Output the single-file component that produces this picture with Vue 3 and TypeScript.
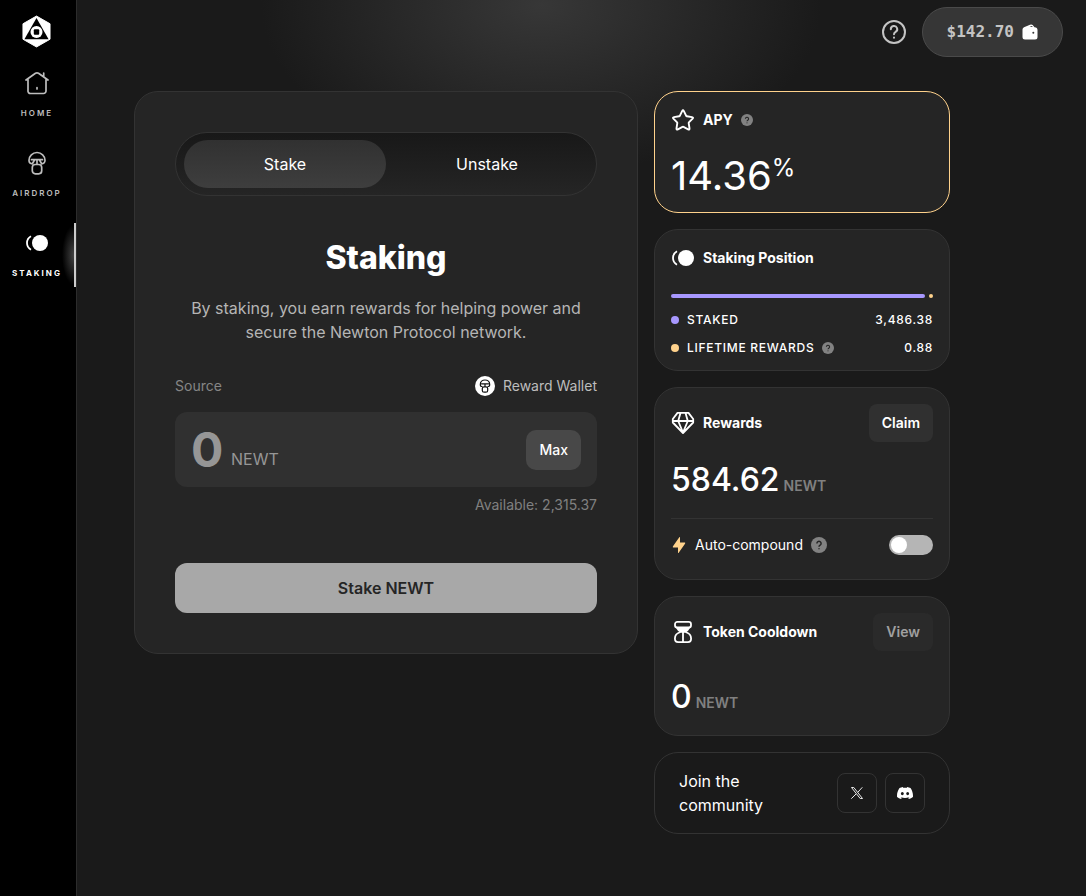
<script setup lang="ts">
import { ref } from 'vue'

type Mode = 'Stake' | 'Unstake'

const modes: Mode[] = ['Stake', 'Unstake']
const mode = ref<Mode>('Stake')
const amount = ref('')
const autoCompound = ref(false)
const available = 2315.37
const staked = 3486.38
const lifetimeRewards = 0.88

const format = (value: number): string =>
  value.toLocaleString('en-US', { minimumFractionDigits: 2, maximumFractionDigits: 2 })

const setMax = (): void => {
  amount.value = String(available)
}
</script>

<template>
  <div class="layout">
    <aside class="sidebar">
      <a class="logo" href="#" aria-label="Newton">
        <svg width="29" height="33" viewBox="0 0 30 34">
          <path d="M15 1 29 9v16l-14 8L1 25V9z" fill="#fff" stroke="#fff" stroke-linejoin="round" />
          <path d="M15 3 27.500 25H2.500z" fill="#000" />
          <circle cx="15" cy="17.500" r="6.200" fill="#fff" />
          <rect x="12.200" y="14.700" width="5.600" height="5.600" rx="1" fill="#000" />
        </svg>
      </a>
      <nav class="nav">
        <a class="nav-item" href="#">
          <svg width="24" height="24" viewBox="0 0 24 24" fill="none" stroke="currentColor" stroke-width="1.700" stroke-linecap="round" stroke-linejoin="round">
            <path d="M1 9 10.500 2.300q1.500-1 3 0L23 9M3 8.500v11A2.500 2.500 0 0 0 5.500 22.500h13a2.500 2.500 0 0 0 2.500-2.500V8.500M18.700 5.500V2M12 16.500v1.500" />
          </svg>
          <span>HOME</span>
        </a>
        <a class="nav-item" href="#">
          <svg width="24" height="24" viewBox="0 0 24 24" fill="none" stroke="currentColor" stroke-width="1.700" stroke-linecap="round" stroke-linejoin="round">
            <path d="M7.500 12.800C5 12.800 4 11 4 9.300a8 7.800 0 0 1 16 0c0 1.700-1 3.500-3.500 3.500M6.500 8.700h11M12 9v4M7.500 12.500 9.500 9M16.500 12.500l-2-3.500" />
            <rect x="7.300" y="13.500" width="9.400" height="9.300" rx="3" />
          </svg>
          <span>AIRDROP</span>
        </a>
        <a class="nav-item active" href="#" aria-current="page">
          <svg width="24" height="24" viewBox="0 0 24 24">
            <circle cx="15" cy="12" r="8" fill="currentColor" />
            <path d="M6 5.300Q2 7.500 2 12t4 6.700" fill="none" stroke="currentColor" stroke-width="1.800" />
          </svg>
          <span>STAKING</span>
        </a>
      </nav>
    </aside>

    <main class="main">
      <header class="topbar">
        <button class="help" type="button" aria-label="Help">
          <svg width="26" height="26" viewBox="0 0 26 26" fill="none" stroke="currentColor" stroke-width="2" stroke-linecap="round" stroke-linejoin="round">
            <circle cx="13" cy="13" r="11" />
            <path d="M9.800 10.200a3.200 3.200 0 1 1 4.800 2.700c-1 .6-1.600 1.100-1.600 2.300M13 18.600v.2" />
          </svg>
        </button>
        <button class="wallet" type="button">
          <span>$142.70</span>
          <svg width="16" height="16" viewBox="0 0 16 16">
            <path d="M.5 5.500Q.5 4 2 3.300L8 .8Q9.500.1 10.700 1L12.500 3.200q3 .2 3 2.800v7q0 2.500-2.500 2.500H3Q.5 15.500.5 13z" fill="#fff" />
            <path d="M7.500 2.900 9.700 2l1.300 1z" fill="#3a3a3a" />
            <circle cx="11.300" cy="8.800" r="1" fill="#3a3a3a" />
          </svg>
        </button>
      </header>

      <div class="content">
        <section class="card stake-card">
          <div class="tabs" role="tablist">
            <button
              v-for="item in modes"
              :key="item"
              type="button"
              role="tab"
              class="tab"
              :class="{ selected: mode === item }"
              :aria-selected="mode === item"
              @click="mode = item"
            >{{ item }}</button>
          </div>
          <h1>Staking</h1>
          <p class="intro">By staking, you earn rewards for helping power and secure the Newton Protocol network.</p>

          <div class="source">
            <label for="amount">Source</label>
            <span class="source-wallet">
              <svg width="20" height="20" viewBox="0 0 20 20" fill="none">
                <circle cx="10" cy="10" r="10" fill="#fff" />
                <g stroke="#111" stroke-width="1.200" stroke-linecap="round" stroke-linejoin="round">
                  <path d="M7 10.500C5.800 10.500 5.300 9.500 5.300 8.400a4.700 4.400 0 0 1 9.400 0c0 1.100-.5 2.100-1.700 2.100M6.500 7.800h7M10 8v2.500" />
                  <rect x="7.300" y="10.800" width="5.400" height="5.400" rx="1.800" />
                </g>
              </svg>
              Reward Wallet
            </span>
          </div>
          <div class="amount">
            <input id="amount" v-model="amount" type="text" inputmode="decimal" placeholder="0" />
            <span class="amount-unit">NEWT</span>
            <button class="max" type="button" @click="setMax">Max</button>
          </div>
          <p class="available">Available: {{ format(available) }}</p>
          <button class="submit" type="button">Stake NEWT</button>
        </section>

        <div class="side">
          <section class="card apy">
            <div class="card-head">
              <svg width="24" height="24" viewBox="0 0 24 24" fill="none" stroke="#fff" stroke-width="1.900" stroke-linejoin="round">
                <path d="M11.100 3.100q.9-1.600 1.800 0l2.300 4.700q.2.400.7.500l5.100.8q1.700.3.600 1.600l-3.700 3.700q-.3.300-.2.800l.8 5.100q.2 1.800-1.400 1l-4.600-2.400q-.5-.2-1 0l-4.600 2.400q-1.600.8-1.400-1l.8-5.100q.1-.5-.2-.8l-3.700-3.700Q1.300 9.400 3 9.100l5.100-.8q.5-.1.700-.5z" />
              </svg>
              <h2>APY</h2>
              <svg class="hint small" viewBox="0 0 16 16" role="img" aria-label="About APY">
                <circle cx="8" cy="8" r="8" />
                <path d="M5.900 6.400a2.100 2.100 0 1 1 3.200 1.800C8.300 8.700 8 9 8 9.700M8 11.300v1" />
              </svg>
            </div>
            <p class="apy-value">14.36<sup>%</sup></p>
          </section>

          <section class="card position">
            <div class="card-head">
              <svg width="24" height="24" viewBox="0 0 24 24">
                <circle cx="15" cy="12" r="8" fill="#fff" />
                <path d="M6 5.300Q2 7.500 2 12t4 6.700" fill="none" stroke="#fff" stroke-width="1.800" />
              </svg>
              <h2>Staking Position</h2>
            </div>
            <div class="bar">
              <span class="bar-staked"></span>
              <span class="bar-rewards"></span>
            </div>
            <dl class="stats">
              <div class="stat">
                <dt><i class="dot violet"></i>STAKED</dt>
                <dd>{{ format(staked) }}</dd>
              </div>
              <div class="stat">
                <dt>
                  <i class="dot amber"></i>LIFETIME REWARDS
                  <svg class="hint small" viewBox="0 0 16 16" role="img" aria-label="About lifetime rewards">
                    <circle cx="8" cy="8" r="8" />
                    <path d="M5.900 6.400a2.100 2.100 0 1 1 3.200 1.800C8.300 8.700 8 9 8 9.700M8 11.300v1" />
                  </svg>
                </dt>
                <dd>{{ format(lifetimeRewards) }}</dd>
              </div>
            </dl>
          </section>

          <section class="card rewards">
            <div class="card-head">
              <svg width="24" height="24" viewBox="0 0 24 24" fill="none" stroke="#fff" stroke-width="1.800" stroke-linejoin="round">
                <path d="M6.500 1.900h11L22.200 8v3.500L12 22 1.800 11.500V8zM1.800 10h20.400M9.500 2 7.200 10 12 21.500 16.800 10 14.500 2" />
              </svg>
              <h2>Rewards</h2>
              <button class="action" type="button">Claim</button>
            </div>
            <p class="value">584.62 <span>NEWT</span></p>
            <div class="auto">
              <svg width="16" height="16" viewBox="0 0 16 16" fill="#ffd28c">
                <path d="M9 0v5.500h5q.5.500 0 1.200L7.500 16H7v-5.500H2q-.5-.5 0-1.200L8.300.2z" />
              </svg>
              <label for="auto-compound">Auto-compound</label>
              <svg class="hint" viewBox="0 0 16 16" role="img" aria-label="About auto-compound">
                <circle cx="8" cy="8" r="8" />
                <path d="M5.900 6.400a2.100 2.100 0 1 1 3.200 1.800C8.300 8.700 8 9 8 9.700M8 11.300v1" />
              </svg>
              <input id="auto-compound" v-model="autoCompound" class="switch" type="checkbox" role="switch" />
            </div>
          </section>

          <section class="card cooldown">
            <div class="card-head">
              <svg width="24" height="24" viewBox="0 0 24 24" fill="none" stroke="#fff" stroke-width="1.800" stroke-linejoin="round">
                <rect x="4" y="1.900" width="16" height="5.600" rx="2.300" />
                <path d="M9.500 12C6 13 3.900 15 3.900 18.500q0 3.600 3.200 3.600h9.800q3.200 0 3.200-3.600C20.100 15 18 13 14.500 12M12 12v10" />
                <path d="M5 8h14q-1.500 3-4.500 4.700h-5Q6.500 11 5 8z" fill="#fff" stroke="none" />
              </svg>
              <h2>Token Cooldown</h2>
              <button class="action muted" type="button">View</button>
            </div>
            <p class="value">0 <span>NEWT</span></p>
          </section>

          <section class="card community">
            <p>Join the community</p>
            <a class="social" href="#" aria-label="X">
              <svg width="14" height="14" viewBox="0 0 14 14" fill="none" stroke="#e8e8e8">
                <path d="M1.500 1.500h2.300l8.700 11h-2.300zM12.300 1.300 7.800 6.300M6 8l-4.700 4.700" />
              </svg>
            </a>
            <a class="social" href="#" aria-label="Discord">
              <svg width="16" height="16" viewBox="0 0 24 24" fill="#fff">
                <path d="M20.300 4.400A19.800 19.800 0 0 0 15.400 2.900l-.6 1.300a18.300 18.300 0 0 0-5.500 0l-.6-1.300a19.700 19.700 0 0 0-4.900 1.500C.5 9.100-.3 13.600.1 18.100a20 20 0 0 0 6 3l1.300-2-1.900-.9.400-.3a14.200 14.200 0 0 0 12.200 0l.4.300-1.900.9 1.300 2a19.900 19.900 0 0 0 6-3c.5-5.200-.9-9.700-3.600-13.700zM8 15.300c-1.200 0-2.200-1.100-2.200-2.400S6.800 10.500 8 10.500s2.200 1.100 2.200 2.400-1 2.400-2.200 2.400zm8 0c-1.200 0-2.200-1.100-2.200-2.400s1-2.400 2.200-2.400 2.200 1.100 2.200 2.400-1 2.400-2.200 2.400z" />
              </svg>
            </a>
          </section>
        </div>
      </div>
    </main>
  </div>
</template>

<style>
body {
  margin: 0;
  background: #1a1a1a;
}
</style>

<style scoped>
* {
  box-sizing: border-box;
}

.layout {
  display: flex;
  min-height: 100vh;
  font-family: Inter, 'Liberation Sans', sans-serif;
  font-size: 14px;
  line-height: 24px;
  color: #fff;
  background: #1a1a1a;
}

button,
input {
  font: inherit;
  color: inherit;
  border: 0;
  padding: 0;
  margin: 0;
  background: none;
}

button {
  cursor: pointer;
}

h1,
h2,
p,
dl,
dd {
  margin: 0;
}

svg {
  display: block;
  flex: none;
}

.sidebar {
  flex: none;
  width: 77px;
  background: #000;
  border-right: 1px solid #2c2c2c;
}

.logo {
  display: flex;
  justify-content: center;
  padding: 15px 3px 15px 0;
}

.nav {
  display: flex;
  flex-direction: column;
  gap: 16px;
}

.nav-item {
  display: flex;
  flex-direction: column;
  align-items: center;
  gap: 10px;
  height: 64px;
  padding-top: 8px;
  color: #bdbdbd;
  font-size: 8px;
  font-weight: 600;
  line-height: 16px;
  letter-spacing: 2px;
  text-decoration: none;
  border-right: 2px solid transparent;
}

.nav-item.active {
  color: #fff;
  font-weight: 700;
  border-right-color: #ccc;
  background: radial-gradient(ellipse 12px 30px at 100% 50%, #444, transparent);
}

.main {
  flex: 1;
  min-width: 0;
  background: radial-gradient(ellipse 280px 170px at 46% 5px, #373737, #1a1a1a);
}

.topbar {
  display: flex;
  align-items: center;
  justify-content: flex-end;
  gap: 15px;
  padding: 7px 23px 0 0;
}

.help {
  color: #c4c4c4;
}

.wallet {
  display: flex;
  align-items: center;
  gap: 8px;
  height: 50px;
  padding: 0 24px;
  border: 1px solid #4a4a4a;
  border-radius: 25px;
  background: #363636;
  color: #c4c4c4;
  font-family: 'DejaVu Sans Mono', monospace;
  font-size: 16px;
  font-weight: 700;
}

.content {
  display: grid;
  grid-template-columns: minmax(0, 1fr) 296px;
  align-items: start;
  gap: 16px;
  padding: 34px 136px 62px 57px;
}

.card {
  border: 1px solid #333;
  border-radius: 24px;
  background: #252525;
}

.stake-card {
  padding: 40px;
}

.tabs {
  display: grid;
  grid-template-columns: 1fr 1fr;
  height: 64px;
  padding: 7px 8px;
  border: 1px solid #333;
  border-radius: 32px;
  background: linear-gradient(#181818, #252525);
}

.tab {
  border-radius: 24px;
  font-size: 16px;
}

.tab.selected {
  background: linear-gradient(#313131, #3e3e3e);
}

h1 {
  margin-top: 42px;
  font-size: 32px;
  font-weight: 800;
  line-height: 40px;
  text-align: center;
}

.intro {
  margin-top: 18px;
  color: #b5b5b5;
  font-size: 16px;
  text-align: center;
}

.source {
  display: flex;
  justify-content: space-between;
  margin-top: 30px;
  color: #868686;
}

.source-wallet {
  display: flex;
  align-items: center;
  gap: 8px;
  color: #bdbdbd;
}

.amount {
  display: flex;
  align-items: center;
  height: 75px;
  margin-top: 14px;
  padding: 0 16px;
  border-radius: 12px;
  background: #303030;
}

.amount input {
  width: 32px;
  height: 60px;
  field-sizing: content;
  min-width: 32px;
  color: #fff;
  font-size: 48px;
  font-weight: 700;
  line-height: 60px;
  outline: none;
}

.amount input::placeholder {
  color: #969696;
  opacity: 1;
}

.amount-unit {
  margin: 18px auto 0 8px;
  color: #969696;
  font-size: 16px;
}

.max {
  height: 40px;
  padding: 0 13px;
  border-radius: 10px;
  background: #484848;
  font-weight: 500;
}

.available {
  margin-top: 6px;
  color: #808080;
  text-align: right;
}

.submit {
  width: 100%;
  height: 50px;
  margin-top: 46px;
  border-radius: 12px;
  background: #a8a8a8;
  color: #252525;
  font-size: 16px;
  font-weight: 600;
}

.side {
  display: grid;
  gap: 16px;
}

.side .card {
  padding: 16px;
}

.card-head {
  display: flex;
  align-items: center;
  gap: 8px;
}

h2 {
  font-size: 14px;
  font-weight: 700;
  line-height: 24px;
}

.hint {
  width: 16px;
  height: 16px;
  fill: none;
  stroke: #252525;
  stroke-width: 1.5px;
}

.hint circle {
  fill: #828282;
  stroke: none;
}

.hint.small {
  width: 12px;
  height: 12px;
}

.side .apy {
  border-color: #ffd28c;
}

.apy-value {
  margin-top: 24px;
  font-size: 40px;
  line-height: 40px;
}

.apy-value sup {
  font-size: 24px;
  line-height: 0;
}

.side .position {
  padding-bottom: 12px;
}

.bar {
  display: flex;
  gap: 4px;
  height: 4px;
  margin-top: 24px;
}

.bar span {
  border-radius: 2px;
}

.bar-staked {
  flex: 1;
  background: #a898ff;
}

.bar-rewards {
  width: 4px;
  background: #ffd28c;
}

.stats {
  display: grid;
  gap: 8px;
  margin-top: 12px;
  font-size: 12px;
  font-weight: 500;
  line-height: 20px;
  letter-spacing: 0.06em;
}

.stat {
  display: flex;
  justify-content: space-between;
}

dt {
  display: flex;
  align-items: center;
  gap: 8px;
}

.dot {
  width: 8px;
  height: 8px;
  border-radius: 50%;
}

.violet {
  background: #a898ff;
}

.amber {
  background: #ffd28c;
}

.side .rewards {
  padding-bottom: 22px;
}

.action {
  height: 38px;
  margin-left: auto;
  padding: 0 13px;
  border-radius: 8px;
  background: #303030;
  font-weight: 600;
}

.action.muted {
  background: #2a2a2a;
  color: #a0a0a0;
}

.value {
  display: flex;
  align-items: baseline;
  gap: 4px;
  height: 40px;
  margin-top: 18px;
  font-size: 32px;
  font-weight: 500;
  line-height: 40px;
}

.value span {
  color: #808080;
  font-size: 14px;
  font-weight: 600;
  line-height: 24px;
}

.auto {
  display: flex;
  align-items: center;
  gap: 8px;
  margin-top: 18px;
  padding-top: 14px;
  border-top: 1px solid #333;
}

.switch {
  appearance: none;
  display: flex;
  align-items: center;
  width: 44px;
  height: 20px;
  margin-left: auto;
  padding: 0 2px;
  border-radius: 10px;
  background: #b5b5b5;
  cursor: pointer;
}

.switch::before {
  content: '';
  width: 16px;
  height: 16px;
  border-radius: 50%;
  background: #fff;
}

.switch:checked {
  justify-content: flex-end;
  background: #a898ff;
}

.cooldown .value {
  margin-top: 26px;
}

.side .cooldown {
  padding-bottom: 18px;
}

.side .community {
  display: flex;
  align-items: center;
  gap: 8px;
  padding: 16px 24px;
  background: #1a1a1a;
  font-size: 16px;
}

.community p {
  max-width: 110px;
  margin-right: auto;
}

.social {
  display: grid;
  place-items: center;
  width: 40px;
  height: 40px;
  border: 1px solid #333;
  border-radius: 8px;
}
</style>
